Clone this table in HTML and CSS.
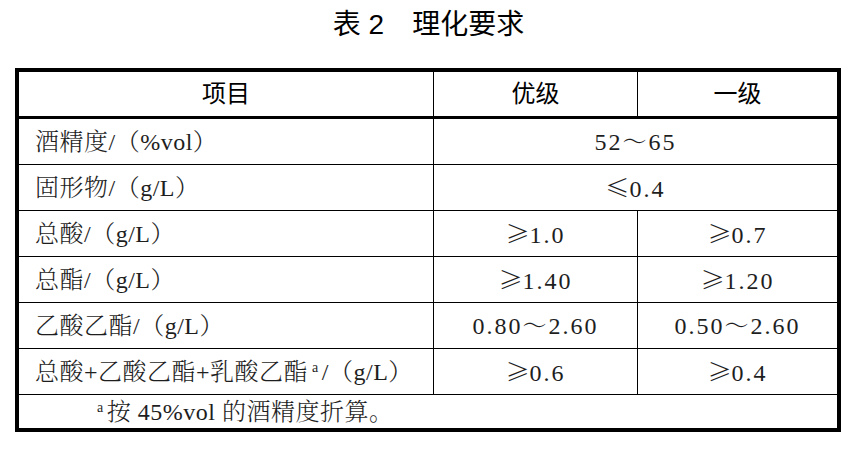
FILE: index.html
```html
<!DOCTYPE html>
<html lang="zh-CN">
<head>
<meta charset="utf-8">
<title>表2 理化要求</title>
<link rel="stylesheet" href="styles.css">
</head>
<body>
<div class="page">
  <h1 class="caption">表 2　理化要求</h1>
  <div class="frame">
    <table class="spec">
      <thead>
        <tr>
          <th class="c1">项目</th>
          <th class="c2">优级</th>
          <th class="c3">一级</th>
        </tr>
      </thead>
      <tbody>
        <tr>
          <td class="item">酒精度/（%vol）</td>
          <td class="val" colspan="2">52～65</td>
        </tr>
        <tr>
          <td class="item">固形物/（g/L）</td>
          <td class="val" colspan="2"><span class="rel">≤</span>0.4</td>
        </tr>
        <tr>
          <td class="item">总酸/（g/L）</td>
          <td class="val"><span class="rel">≥</span>1.0</td>
          <td class="val"><span class="rel">≥</span>0.7</td>
        </tr>
        <tr>
          <td class="item">总酯/（g/L）</td>
          <td class="val"><span class="rel">≥</span>1.40</td>
          <td class="val"><span class="rel">≥</span>1.20</td>
        </tr>
        <tr>
          <td class="item">乙酸乙酯/（g/L）</td>
          <td class="val">0.80～2.60</td>
          <td class="val">0.50～2.60</td>
        </tr>
        <tr>
          <td class="item">总酸+乙酸乙酯+乳酸乙酯<sup class="mark">a</sup>/（g/L）</td>
          <td class="val"><span class="rel">≥</span>0.6</td>
          <td class="val"><span class="rel">≥</span>0.4</td>
        </tr>
        <tr class="foot">
          <td colspan="3"><sup class="mark">a</sup>按 45%vol 的酒精度折算。</td>
        </tr>
      </tbody>
    </table>
  </div>
</div>
</body>
</html>
```

FILE: styles.css
```css
html, body {
  margin: 0;
  padding: 0;
  background: #ffffff;
}

.page {
  width: 859px;
  color: #111;
}

.caption {
  margin: 0;
  height: 50px;
  line-height: 50px;
  text-align: center;
  font-family: "Liberation Sans", "Noto Sans CJK SC", sans-serif;
  font-size: 28px;
  font-weight: 400;
  color: #000;
  padding-right: 2px;
}

.frame {
  margin: 18px 0 0 15px;
  width: 818px;
  border: 4px solid #000;
}

.spec {
  width: 818px;
  border-collapse: separate;
  border-spacing: 0;
  table-layout: fixed;
  font-family: "Liberation Serif", "Noto Serif CJK SC", "Noto Sans CJK SC", serif;
  font-size: 24px;
  font-weight: 300;
  color: #1e1e1e;
}

.spec th,
.spec td {
  box-sizing: border-box;
  padding: 0;
  vertical-align: middle;
  border-right: 1px solid #000;
  border-bottom: 1px solid #000;
  line-height: 1;
}

.spec th:last-child,
.spec td:last-child {
  border-right: none;
}

.spec th {
  height: 47px;
  border-bottom: 3px solid #000;
  font-family: "Liberation Sans", "Noto Sans CJK SC", sans-serif;
  font-size: 24px;
  font-weight: 400;
  color: #000;
  text-align: center;
}

.spec .c1 { width: 415px; }
.spec .c2 { width: 204px; }
.spec .c3 { width: 199px; }

.spec td {
  height: 46px;
}

.spec .item {
  text-align: left;
  padding-left: 16px;
  letter-spacing: 0.5px;
}

.spec .val {
  text-align: center;
  letter-spacing: 2px;
}

.rel {
  font-family: "Noto Sans CJK SC", sans-serif;
  font-weight: 300;
  letter-spacing: 0;
}

.mark {
  font-size: 14px;
  vertical-align: 8px;
  line-height: 0;
  padding: 0 3px 0 4px;
}

.spec .foot td {
  height: 33px;
  border-bottom: none;
  text-align: left;
  padding-left: 74px;
  letter-spacing: 0.5px;
}
```
